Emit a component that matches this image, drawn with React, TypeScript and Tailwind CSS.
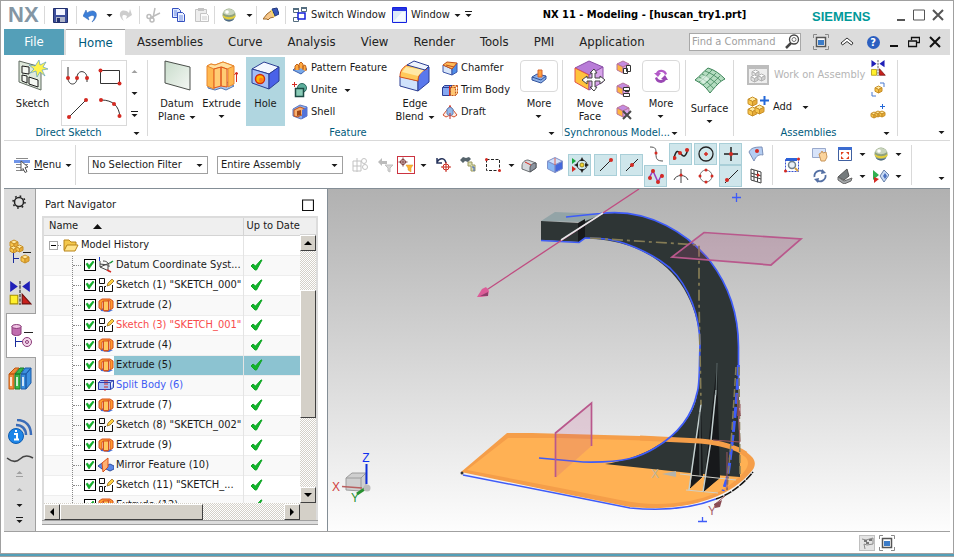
import React from "react";

type Kids = { children?: React.ReactNode };

/* ---------- drawing helpers ---------- */

function Svg({ w = 16, h = 16, className = "", children }: Kids & { w?: number; h?: number; className?: string }) {
  return (
    <svg width={w} height={h} viewBox={`0 0 ${w} ${h}`} fill="none" aria-hidden="true" className={`block shrink-0 ${className}`}>
      {children}
    </svg>
  );
}

function Caret({ color = "#1a1a1a", up = false, bar = false }: { color?: string; up?: boolean; bar?: boolean }) {
  return (
    <Svg w={7} h={8}>
      {bar && <path d="M0 .5h7" stroke={color} />}
      <path d={up ? "M.5 6h6l-3-3z" : "M.5 3h6l-3 3z"} fill={color} />
    </Svg>
  );
}

function CubeShape({ x, y, s, top, left, right, line }: { x: number; y: number; s: number; top: string; left: string; right: string; line: string }) {
  const q = s / 4;
  const h = s / 2;
  return (
    <g stroke={line} strokeLinejoin="round" transform={`translate(${x} ${y})`}>
      <path d={`M0 ${q}L${h} 0L${s} ${q}L${h} ${h}z`} fill={top} />
      <path d={`M0 ${q}L${h} ${h}V${s}L0 ${s - q}z`} fill={left} />
      <path d={`M${s} ${q}L${h} ${h}V${s}L${s} ${s - q}z`} fill={right} />
    </g>
  );
}

const Gold = ({ x, y, s }: { x: number; y: number; s: number }) => (
  <CubeShape x={x} y={y} s={s} top="#ffe9a0" left="#f8c64c" right="#e8ac38" line="#c89028" />
);
const Dot = ({ x, y, r = 2 }: { x: number; y: number; r?: number }) => <circle cx={x} cy={y} r={r} fill="#d42a22" />;

/* ---------- quick access icons ---------- */

const SaveIcon = () => (
  <Svg w={15} h={15}>
    <path d="M.5.5h14v14h-14z" fill="#3d4f9c" stroke="#22306e" />
    <path d="M3 1h9v6H3z" fill="#f4f6ff" />
    <path d="M3 9h9v5H3z" fill="#aeb4c8" />
    <path d="M4 10h3v4H4z" fill="#22306e" />
  </Svg>
);
const UndoIcon = () => (
  <Svg>
    <path d="M4 6c5-4 11-2 9 4-1 2-2 4-4 5 5-7 1-8-4-5l1 3-6-4 3-6z" fill="#3c7fd8" stroke="#2a60b0" strokeWidth=".5" />
  </Svg>
);
const RedoIcon = () => (
  <Svg>
    <path d="M11 6C7 2 1 3 2 9c1 2 2 4 4 5C2 8 6 7 9 9l-1 3 6-4-2-6z" fill="#cdcdcd" />
  </Svg>
);
const CutIcon = () => (
  <Svg>
    <path d="M9 1 7 11M14 6 4 11" stroke="#bcbcbc" strokeWidth="1.5" />
    <circle cx="6" cy="13" r="2" stroke="#bcbcbc" strokeWidth="1.5" />
    <circle cx="3" cy="9.500" r="2" stroke="#bcbcbc" strokeWidth="1.500" />
  </Svg>
);
const CopyIcon = () => (
  <Svg>
    <path d="M1.500 1.500h6l2 2v7h-8z" fill="#dfe9ff" stroke="#3450c0" />
    <path d="M6.500 5.500h5l2 2v7h-7z" fill="#eef3ff" stroke="#3450c0" />
    <path d="M8 9h4M8 11h4M8 13h4M3 4h3M3 6h3M3 8h3" stroke="#6f8ce0" />
  </Svg>
);
const PasteIcon = () => (
  <Svg>
    <path d="M1.500 2.500h11v12h-11z" fill="#ededed" stroke="#c4c4c4" />
    <path d="M4 1h6v3H4z" fill="#c4c4c4" />
    <path d="M6.500 6.500h6l2 2v6h-8z" fill="#fafafa" stroke="#c4c4c4" />
    <path d="M8 10h5M8 12h5" stroke="#ccc" />
  </Svg>
);
function SphereIcon() {
  return (
    <Svg w={14} h={14}>
      <circle cx="7" cy="7" r="6.500" fill="#8fa27c" />
      <path d="M1 5a6.500 6.500 0 0 1 12 0c-4 3-8 3-12 0z" fill="#c8d4bc" />
      <path d="M.6 7c4 3 9 3 12.800 0v2c-4 3-9 3-12.300 0z" fill="#e6cf3a" />
      <path d="M1.500 10.500c3 2 8 2 11 0a6.500 6.500 0 0 1-11 0z" fill="#4c6a8c" />
      <circle cx="5" cy="4" r="1.800" fill="#fff" />
    </Svg>
  );
}
const HandIcon = () => (
  <Svg>
    <path d="m0 12 4-5 4-3 4 3-1 3-4 1-2 2-1-1z" fill="#f7c78a" stroke="#9c6a2c" />
    <path d="m9 2 5-1 2 6-4 2z" fill="#3656b8" stroke="#22387c" />
    <path d="m8 3 3 7" stroke="#f4d860" strokeWidth="1.500" />
  </Svg>
);
const SwitchIcon = () => (
  <Svg>
    <path d="M1.500 1.500h5v4h-5zM9.500.500h5v4h-5zM1.500 10.500h5v4h-5z" fill="#fff" stroke="#556e80" />
    <path d="M1 1h6v2H1zM9 0h6v2H9z" fill="#556e80" />
    <path d="M6 6h7v6H6z" fill="#fff" stroke="#1420d8" strokeWidth="1.500" />
  </Svg>
);
const WindowIcon = () => (
  <Svg w={15}>
    <path d="M.5.500h14v15H.5z" fill="#dcebf8" stroke="#1420e0" />
    <path d="M1 1h13v3H1z" fill="#2434e0" />
    <path d="m2 14 8-9h3v9z" fill="#f4faff" />
  </Svg>
);

/* ---------- ribbon icons ---------- */

const SketchBig = () => (
  <Svg w={32} h={32}>
    <path d="M2 1 24 7v23L2 22z" fill="#dfe9dc" stroke="#5f6a60" />
    <path d="m5 6 7 1v7l-7-1zM5 15l5 1v7l-5-2zM12 17l9 3v7l-9-3z" fill="#f4f8f2" stroke="#1c1c1c" />
    <path d="m22 0 1 5 6-3-3 5 5 2-6 1 3 6-5-4-3 5-1-6-6 2 4-4-5-4 6 1z" fill="#fff34c" stroke="#5fa0c0" strokeWidth=".7" />
  </Svg>
);
const DatumBig = () => (
  <Svg w={32} h={32}>
    <defs>
      <linearGradient id="datum" x1="0" y1="0" x2="1" y2="1">
        <stop offset="0" stopColor="#c8dccb" />
        <stop offset="1" stopColor="#f4f7f3" />
      </linearGradient>
    </defs>
    <path d="m4 1 25 6v23L4 23z" fill="url(#datum)" stroke="#4a4f4a" />
  </Svg>
);
const ExtrudeBig = () => (
  <Svg w={32} h={32}>
    <path d="m2 26 6-3 6 2 7-3 7 4-8 4-5-2-6 2-7-2z" fill="#a9c8f0" stroke="#5577b0" />
    <path d="m1 6 4-2 4 1 8-3 11 4v18l-6 3V9l-6-2-8 2v20l-7-3z" fill="#ffb850" stroke="#e8862c" />
    <path d="m1 6 4-2 4 1 8-3 11 4-7 3-5-2-8 2z" fill="#ffe0a0" stroke="#e8862c" />
    <path d="M8 9l7-2v19l-7 2zM15 7l6 2v18l-6-1z" fill="#ffcc74" stroke="#e0541c" />
    <path d="M30.500 22V13M28.500 15l2-3 2 3" stroke="#d42a22" />
  </Svg>
);
const HoleBig = () => (
  <Svg w={32} h={32}>
    <path d="m2 9 12-7 15 5-10 7z" fill="#f3f7ff" stroke="#2c3f94" />
    <path d="m2 9 17 5v15L2 23z" fill="#a3bdf6" stroke="#2c3f94" />
    <path d="m19 14 10-7v14l-10 8z" fill="#4a62e8" stroke="#2c3f94" />
    <circle cx="10" cy="19" r="4.500" fill="#ffb400" stroke="#d42a10" strokeWidth="1.500" />
    <circle cx="11" cy="20" r="2.200" fill="#ff7a1c" />
  </Svg>
);
const BlendBig = () => (
  <Svg w={32} h={32}>
    <path d="m1 16 18 5v10L1 26z" fill="#cfe2fb" stroke="#2c3f94" />
    <path d="M19 20c0-6 4-9 11-13v15l-11 9z" fill="#5a78ec" stroke="#2c3f94" />
    <path d="M1 17C1 11 3 8 8 5l20 4c-6 2-9 6-9 12z" fill="#ffc95a" stroke="#d8501c" />
    <path d="m3 12 16 4 6-6L7 7z" fill="#ffe9a6" />
    <path d="m8 5 7-4 15 5-4 4z" fill="#eef4fe" stroke="#2c3f94" />
  </Svg>
);
const MoveFaceBig = () => (
  <Svg w={32} h={32}>
    <path d="m1 8 14-7 14 6-14 8z" fill="#b87cd8" stroke="#8a4fa6" />
    <path d="m1 8 14 7v15L1 22z" fill="#ffc33c" stroke="#e0504c" />
    <path d="M29 7v15l-14 8V15z" fill="#d8a5ea" stroke="#8a4fa6" />
    <path d="m20 9 3 4h-2v5h5v-2l5 4-5 4v-3h-5v6h2l-3 4-4-4h2v-6h-5v3l-5-4 5-4v2h5v-5h-2z" fill="#fff" stroke="#444" />
  </Svg>
);
const SurfaceBig = () => (
  <Svg w={32} h={28}>
    <path d="M1 13C6 9 9 5 14 1c7 2 12 6 17 11-5 2-10 8-15 14C12 20 7 16 1 13z" fill="#b4dcc0" stroke="#3c8458" />
    <path d="M5 15c5-3 9-8 13-12M9 18c5-3 9-8 13-12M12 22c5-4 10-9 14-13M5 10c6 3 11 7 15 12M8 7c6 3 12 7 16 11M11 4c6 2 12 6 16 10" stroke="#3c8458" strokeWidth=".8" />
    <path d="m5 13 6-5 5 3-6 6z" fill="#f0faf4" opacity=".6" />
  </Svg>
);
const PatternIcon = () => (
  <Svg>
    <path d="m1 10 5-4 9 3-6 5z" fill="#78a8e8" stroke="#3c62b0" />
    <path d="M3 10V6l2-2 2 2v4M7 8V4l2-2 2 2v5M11 10V6l2-1 1 2v4" fill="#ffa940" stroke="#c0641c" />
  </Svg>
);
const UniteIcon = () => (
  <Svg>
    <circle cx="10" cy="6" r="4.500" fill="#5cae9c" stroke="#2c6a60" />
    <path d="M3.500 6.500h8v8h-8z" fill="#8accb8" stroke="#1c4a44" strokeWidth="1.500" />
    <path d="M2.500 0v5M0 2.500h5" stroke="#d42a22" />
  </Svg>
);
const ShellIcon = () => (
  <Svg>
    <path d="m1 5 7-4 7 2v9l-6 3-8-3z" fill="#88aef0" stroke="#6078c0" />
    <path d="m2 6 6-3 5 2v7l-4-1-3 2-4-1z" fill="#f8b070" stroke="#c0501c" />
    <path d="m5 7 4-1v5l-4 1z" fill="#a04818" />
    <path d="m10 6 5-3v9l-5 3z" fill="#5273d8" />
  </Svg>
);
const ChamferIcon = () => (
  <Svg>
    <path d="m1 5 9 4v6l-9-3z" fill="#d8e6fa" stroke="#3c55a8" />
    <path d="m10 9 5-6v9l-5 3z" fill="#4d8ce8" stroke="#3c55a8" />
    <path d="m1 5 4-3 10 1-5 6z" fill="#ffbb58" stroke="#c0501c" />
    <path d="m4 5 8 2" stroke="#c0501c" />
  </Svg>
);
const TrimIcon = () => (
  <Svg>
    <path d="M.5 5.500h8v8h-8zM.5 5.500l2-2h8l-2 2" fill="#86a8f2" stroke="#2c3f94" />
    <path d="M8.500 5.500h5v8h-5zM8.500 5.500l2-2h5l-2 2M15.500 3.500v8l-2 2" fill="#ffc672" stroke="#c0501c" strokeDasharray="2 1" />
    <path d="M7.500 4v10" stroke="#d42a22" />
  </Svg>
);
const DraftIcon = () => (
  <Svg>
    <path d="m1 11 7-9 7 9-3 2-4-2-4 2z" fill="#fbeee8" stroke="#d4502c" />
    <path d="m5 5 3-2 3 2v5l-3 2-3-2z" fill="#94b8e8" stroke="#6484bc" />
    <path d="M8 9v6M8 1v2" stroke="#d42a22" />
  </Svg>
);
const MoreFeature = () => (
  <Svg>
    <path d="m1 9 5-3 9 2v3l-5 4-9-3z" fill="#8cb0e8" stroke="#33549c" />
    <path d="m1 9 9 3 5-4" stroke="#33549c" />
    <path d="M7 2h4v7H7z" fill="#ffa03c" stroke="#d8642c" />
  </Svg>
);
const MoreSync = () => (
  <Svg>
    <path d="M14 6a6 6 0 0 0-11-1H1l4 4 3-4H6c2-2 5-1 6 2z" fill="#b45ac8" />
    <path d="M2 10a6 6 0 0 0 11 2h2l-3-5-4 4h2c-2 2-5 1-6-2z" fill="#9a48b4" />
  </Svg>
);
function SyncSmall({ kind }: { kind: "copy" | "resize" | "delete" }) {
  return (
    <Svg>
      <CubeShape x={1} y={1} s={12} top="#c48be0" left="#ffb540" right="#d8a5ea" line="#b8749c" />
      {kind === "copy" && <path d="M7.500 8.500h4v5h-4zM10.500 5.500h4v6h-4z" fill="#fff" stroke="#333" />}
      {kind === "resize" && <path d="M7.500 5.500h6v3h-6zM7.500 11.500h6v3h-6zM9 9.500h4" fill="#fff" stroke="#333" />}
      {kind === "delete" && <path d="m7 7 8 8m0-8-8 8" stroke="#4a4a4a" strokeWidth="2" />}
    </Svg>
  );
}
const WorkAsmIcon = () => (
  <Svg w={22} h={20}>
    <path d="M1 1h20v18H1z" fill="#eee" stroke="#bdbdbd" strokeWidth="2" />
    <path d="M1 1h20v3H1z" fill="#bdbdbd" />
    <CubeShape x={5} y={5} s={7} top="#fff" left="#e2e2e2" right="#cfcfcf" line="#b4b4b4" />
    <CubeShape x={4} y={10} s={7} top="#fff" left="#e2e2e2" right="#cfcfcf" line="#b4b4b4" />
    <CubeShape x={11} y={9} s={7} top="#fff" left="#e2e2e2" right="#cfcfcf" line="#b4b4b4" />
  </Svg>
);
const AddIcon = () => (
  <Svg w={22} h={22}>
    <Gold x={1} y={1} s={9} />
    <Gold x={1} y={11} s={9} />
    <Gold x={8} y={9} s={9} />
    <path d="M17.500 0v9M13 4.500h9" stroke="#2468d8" strokeWidth="2" />
  </Svg>
);
function ConstraintIcon({ s = 16 }: { s?: number }) {
  return (
    <svg width={s} height={s} viewBox="0 0 20 22" aria-hidden="true" className="block shrink-0">
      <path d="M1 0v10l7-5zM19 0v10l-7-5z" fill="#2020b8" />
      <path d="M10 0v22" stroke="#222" strokeDasharray="3 1" />
      <path d="M1 13h7v8H1z" fill="#fff02c" stroke="#a89000" />
      <path d="M12 12v9h8z" fill="#c8201c" stroke="#701010" />
    </svg>
  );
}
const MoveComp = () => (
  <Svg>
    <Gold x={5} y={4} s={7} />
    <path d="M10 1h4v4M6 14H2v-4" stroke="#4a7ad0" />
  </Svg>
);
const PatternComp = () => (
  <Svg>
    <Gold x={1} y={8} s={6} />
    <Gold x={5} y={7} s={6} />
    <Gold x={9} y={7} s={6} />
    <path d="M12.500 0v5M10 2.500h5" stroke="#2468d8" />
  </Svg>
);

const CurveProfile = () => (
  <Svg w={26} h={24}>
    <path d="M3 2v11c0 8 9 8 9 0 0-9 10-8 10 0v4" stroke="#333" />
    <Dot x={3} y={13} /><Dot x={12} y={13} /><Dot x={22} y={13} />
  </Svg>
);
const RectCurve = () => (
  <Svg w={26} h={24}>
    <path d="M3.500 5.500h19v13h-19z" stroke="#333" />
    <Dot x={3.500} y={5.500} /><Dot x={22.500} y={18.500} />
  </Svg>
);
const LineCurve = () => (
  <Svg w={26} h={24}>
    <path d="M4 20 21 3" stroke="#333" />
    <Dot x={4} y={20} /><Dot x={21} y={3} />
  </Svg>
);
const ArcCurve = () => (
  <Svg w={26} h={24}>
    <path d="M4 3c12 0 18 6 19 17" stroke="#333" />
    <Dot x={4} y={3} /><Dot x={17} y={7} /><Dot x={22.500} y={19} />
  </Svg>
);

/* ---------- selection bar icons ---------- */

const MenuIcon = () => (
  <Svg>
    <path d="M2 1.500h12M2 7.500h12M2 10.500h8M2 13.500h8" stroke="#8a8a8a" />
    <path d="M0 3h16v3H0z" fill="#6f94e8" />
    <path d="m7 4 7 6-3 .500 2 4-2 1-2-4-2 2z" fill="#fff" stroke="#555" />
  </Svg>
);
const Target = ({ x, y, r, c }: { x: number; y: number; r: number; c: string }) => (
  <g stroke={c}>
    <circle cx={x} cy={y} r={r} />
    <path d={`M${x - r - 2} ${y}h${2 * r + 4}M${x} ${y - r - 2}v${2 * r + 4}`} />
  </g>
);
const AllowIcon = () => (
  <Svg>
    <path d="M1 4h8v10H1zM5 1v14M1 9h8" stroke="#c2c2c2" />
    <circle cx="12" cy="4" r="2.500" stroke="#c2c2c2" /><circle cx="13" cy="10" r="2.500" stroke="#c2c2c2" />
  </Svg>
);
const ResetFilter = () => (
  <Svg>
    <path d="m1 5 4-4v3h5v3H5v2z" fill="#bbb" />
    <path d="M8 8h8l-3 3v4l-2-1v-3z" fill="#d8d8d8" stroke="#c0c0c0" />
  </Svg>
);
const FilterRed = () => (
  <Svg>
    <Target x={5} y={5} r={2.500} c="#7c3a3a" />
    <path d="M8 8h7l-2 3v4l-3-2v-2z" fill="#ffb430" stroke="#d89020" strokeWidth=".5" />
  </Svg>
);
const SnapUndo = () => (
  <Svg>
    <path d="M1 1v5h5M1 5c3-5 8-4 9 1" stroke="#27345c" strokeWidth="1.500" />
    <Target x={10} y={10} r={3} c="#c8281c" />
  </Svg>
);
const ToolsFind = () => (
  <Svg>
    <path d="m0 3 3-3 3 1 3-1 2 2-3 3-3-1-2 2z" fill="#56646c" />
    <path d="M8 5h4v3h3v6h-4V9H8z" fill="#d8dcae" stroke="#9c9a60" />
    <path d="M12 10h2v4" stroke="#3a60c0" />
  </Svg>
);
const DashRect = () => (
  <Svg>
    <path d="M1.500 2.500h13v11h-13z" stroke="#222" strokeDasharray="3 1.500" />
    <Dot x={1.500} y={2.500} r={1.500} /><Dot x={14.500} y={13.500} r={1.500} />
  </Svg>
);
const GrayBlend = () => (
  <Svg>
    <path d="M1 9c0-4 3-6 6-6l8 3v5l-6 4-8-3z" fill="#d4d8dc" stroke="#6c7074" />
    <path d="M9 15V11c0-3 3-5 6-5v5z" fill="#8c94a0" stroke="#54585c" />
    <path d="m4 5 6 3" stroke="#d42a22" />
  </Svg>
);
const BlueCube = () => (
  <Svg>
    <CubeShape x={0.5} y={0.5} s={15} top="#cfe0fa" left="#88b8f4" right="#4468dc" line="#8090c8" />
    <path d="M8 1v7" stroke="#e06050" />
  </Svg>
);
const SnapPoint = () => (
  <Svg w={18} h={18}>
    <path d="m1 2 4 3-4 3z" fill="#18a83c" /><path d="m1 10 4 3-4 3z" fill="#d42a22" />
    <circle cx="11" cy="9" r="5" stroke="#444" />
    <path d="M11 1 9 5h4zM11 17l-2-4h4zM3 9l4-2v4zM18 9l-4-2v4z" fill="#222" />
    <circle cx="11" cy="9" r="2" fill="#f2d830" stroke="#a08820" />
  </Svg>
);
const EndPoint = () => <Svg><path d="m2 14 12-12" stroke="#222" /><Dot x={13} y={3} /></Svg>;
const MidPoint = () => <Svg><path d="m2 14 12-12" stroke="#222" /><Dot x={8} y={8} /></Svg>;
const ControlPt = () => <Svg><path d="M2 1c6 0 6 2 6 7s1 7 7 7" stroke="#555" /><Dot x={8} y={7} r={1.500} /></Svg>;
const SplinePt = () => (
  <Svg><path d="M1 12c2-8 4-8 7-4s5 2 7-5" stroke="#222" strokeWidth="1.500" /><Dot x={1.500} y={12} /><Dot x={7} y={7} /><Dot x={14} y={4} /></Svg>
);
const CenterPt = () => <Svg><circle cx="8" cy="8" r="7" stroke="#222" strokeWidth="1.300" /><path d="M6 8h4M8 6v4" stroke="#d42a22" strokeWidth="1.500" /></Svg>;
const CrossPt = () => <Svg><path d="M8 1v14M1 8h14" stroke="#222" strokeWidth="1.500" /><Dot x={8} y={8} /></Svg>;
const SheetPt = () => <Svg><path d="M1 6c2-4 5-5 13-5l1 8c-4-1-7 1-9 6z" fill="#b4cdf2" stroke="#7c90b8" /><Dot x={9} y={5} /></Svg>;
const PolePt = () => (
  <Svg><path d="m1 10 4-7 5 11 4-8" stroke="#9a3cc0" strokeWidth="1.500" /><Dot x={2} y={10} /><Dot x={5} y={3} /><Dot x={10} y={14} /><Dot x={14} y={8} /></Svg>
);
const TangentPt = () => <Svg><path d="M8 1v14M1 12c2-6 12-6 14 0" stroke="#444" /><Dot x={8} y={7} r={1.500} /></Svg>;
const QuadPt = () => (
  <Svg><circle cx="8" cy="8" r="6" stroke="#777" /><Dot x={8} y={2} r={1.500} /><Dot x={8} y={14} r={1.500} /><Dot x={2} y={8} r={1.500} /><Dot x={14} y={8} r={1.500} /></Svg>
);
const OnCurve = () => <Svg><path d="m2 15 13-13" stroke="#222" /><Dot x={4} y={12} /></Svg>;
const GridPt = () => <Svg><path d="m3 1 10 3v11L3 12zM6 2v11M9.500 3v11M3 5l10 3M3 8l10 3" stroke="#444" /><Dot x={10} y={7} r={1.500} /></Svg>;
const FitIcon = () => (
  <Svg>
    <path d="M1.500 2.500h13v12h-13z" stroke="#3450d0" strokeDasharray="2 1" /><path d="M2 1h11v3H2z" fill="#2c62d8" />
    <circle cx="8" cy="8" r="3.500" fill="#eaf0f6" stroke="#70808c" strokeWidth="1.500" /><path d="m11 11 3 3" stroke="#d8a040" strokeWidth="2" />
    <Dot x={1.500} y={14} r={1.500} /><Dot x={14.500} y={2} r={1.500} />
  </Svg>
);
const PanIcon = () => (
  <Svg><path d="M.5 2.500h13v9H.5z" fill="#d8e4fa" stroke="#99a9cc" /><path d="m7 8 2-1 1-2 1 2 3-1 1 5-2 4h-4z" fill="#fbd49c" stroke="#c8965c" /></Svg>
);
const FullView = () => (
  <Svg><path d="M1.500 2.500h13v12h-13z" fill="#fff" stroke="#4060a0" /><path d="M1 1h14v3H1z" fill="#3c6cd0" /><path d="M4 6h3L4 9zM12 6H9l3 3zM4 13v-3l3 3zM12 13v-3l-3 3z" fill="#e0401c" /></Svg>
);
const RotateIcon = () => (
  <Svg><path d="M2.500 9a5.500 5.500 0 0 1 9-5M13.500 7a5.500 5.500 0 0 1-9 5" stroke="#5470a4" strokeWidth="1.800" /><path d="m10 1 4 4-5 1zM6 15l-4-4 5-1z" fill="#5470a4" /></Svg>
);
const ShadeIcon = () => (
  <Svg><path d="m1 9 9-8 2 7-5 4z" fill="#747a7c" stroke="#555" /><path d="m1 9 6 4 8-3-1 3-7 3-6-4z" fill="#a4a8aa" stroke="#666" /></Svg>
);
const ClipIcon = () => (
  <Svg><path d="m0 2 6 5-6 5z" fill="#30b050" /><path d="m1 9 5 2-5 4z" fill="#d42a22" /><path d="m7 8 4-6 5 5-5 7z" fill="#c8daf4" stroke="#6680a8" /><path d="m10 8 2-3 2 3-2 3z" fill="#4a70c0" /></Svg>
);

/* ---------- resource bar icons ---------- */

const GearIcon = () => (
  <Svg w={14} h={14}>
    <circle cx="7" cy="7" r="4.500" stroke="#222" strokeWidth="1.500" />
    <circle cx="7" cy="7" r="6" stroke="#222" strokeWidth="1.500" strokeDasharray="1.700 3" />
  </Svg>
);
const AsmNavIcon = () => (
  <Svg w={24} h={26}>
    <Gold x={2} y={1} s={8} /><Gold x={2} y={7} s={7} /><Gold x={8} y={6} s={7} /><Gold x={13} y={16} s={8} />
    <path d="M15 13.500h8" stroke="#222" /><path d="M5.500 14v10M6 19.500h5" stroke="#1a2c9c" />
  </Svg>
);
const PartNavIcon = () => (
  <Svg w={24} h={26}>
    <path d="M2 3v8c2 2 7 2 9 0V3z" fill="#c06cae" stroke="#8a3a78" /><ellipse cx="6.500" cy="3.500" rx="4.500" ry="2" fill="#f0c4e4" stroke="#8a3a78" />
    <path d="M14 9.500h9" stroke="#222" /><path d="M5.500 14v10M6 18.500h6" stroke="#1a2c9c" />
    <circle cx="17" cy="19" r="4.500" fill="#f4d8ec" stroke="#8a3a78" /><circle cx="17" cy="19" r="1.500" stroke="#8a3a78" />
  </Svg>
);
const BooksIcon = () => (
  <Svg w={24} h={24}>
    <path d="M1 8h5v15H1zM1 8l6-6h4L6 8z" fill="#f08a3c" stroke="#c05810" />
    <path d="M7 8h5v15H7zM7 8l5-6h4l-4 6z" fill="#38b848" stroke="#187a28" />
    <path d="M13 8h5v15h-5zM13 8l4-6h6l-5 6zM18 8l5-6v15l-5 6z" fill="#3c90e0" stroke="#1c5ca8" />
    <path d="M3 11v9M9 11v9M15 11v9" stroke="#fff" strokeWidth="1.500" />
  </Svg>
);
const InfoIcon = () => (
  <Svg w={26} h={26}>
    <path d="M9 6c6 0 10 4 10 10M10 1c9 0 14 6 14 15" stroke="#3a6cb8" strokeWidth="2.500" />
    <circle cx="9" cy="17" r="7.500" fill="#1e86e8" stroke="#0e5cb0" />
    <path d="M7 15h3v5M7 20.500h5" stroke="#fff" strokeWidth="2" /><path d="M8 11h2v2H8z" fill="#fff" />
  </Svg>
);

/* ---------- tree icons ---------- */

const FolderIcon = () => (
  <Svg>
    <path d="M1 13V3h5l2 2h5v3" fill="#f4c84c" stroke="#b88418" /><path d="m1 14 3-6h11l-3 6z" fill="#ffe48c" stroke="#b88418" />
  </Svg>
);
const CsysIcon = () => (
  <Svg><path d="M2 4v6l9 4M2 10l12-5M5 4c4 0 6 2 6 6M2 7l8 1v5" stroke="#444" /><path d="M1.500 0v4" stroke="#2040d0" /><path d="m12 6 3-2" stroke="#20a040" strokeWidth="1.500" /><path d="m9 13 4 2" stroke="#d42a22" strokeWidth="1.500" /></Svg>
);
const SketchIcon = () => (
  <Svg><path d="M1.500 1.500h5v5h-5zM1.500 9.500h3v5h-3zM8 9.500H6.500v5h8V8" stroke="#111" /><path d="m9 9 1-3 4-4 2 2-4 4z" fill="#ffd040" stroke="#8a5a10" strokeWidth=".7" /></Svg>
);
const ExtrudeIcon = () => (
  <Svg><path d="m2 11 13 2-4 2-8-1z" fill="#3c70e0" /><path d="m1 4 3-2h8l3 2v7l-3 2V4l-2-1v11H6V4L4 5v8l-3-2z" fill="#ff9c30" stroke="#d4501c" /><path d="M5.500 4h5v9.500h-5z" fill="#ffc860" stroke="#d4501c" /></Svg>
);
const SplitIcon = () => (
  <Svg><path d="M.5 5.500h12v7H.5zM.5 5.500l2-2h13l-3 2M15.500 3.500v7l-3 2" fill="#a8c0f8" stroke="#3040b0" /><path d="M7 3v11M9 3v9" stroke="#d42a22" strokeDasharray="2 1" /></Svg>
);
const MirrorIcon = () => (
  <Svg><path d="m0 9 4-3 4 1v4l-4 1zM8 9l4-2 4 2v3l-4 2-4-2z" fill="#5c88e8" stroke="#3050a0" /><path d="m4 6 6-5v9l-5 5z" fill="#ffb070" stroke="#d8501c" /></Svg>
);
const GreenCheck = () => (
  <Svg w={13} h={12}><path d="m1 7 2-2 2.500 2L11 1h1L6.500 11H5z" fill="#12b52c" stroke="#12a528" /></Svg>
);

/* ---------- layout parts ---------- */

function Slot({ className, label, children }: Kids & { className: string; label: string }) {
  return (
    <button type="button" aria-label={label} className={`flex shrink-0 items-center justify-center ${className}`}>
      {children}
    </button>
  );
}

const Sep = ({ className = "h-[18px]" }: { className?: string }) => <div className={`w-px shrink-0 bg-[#d9d9d9] ${className}`} />;

function TitleBar() {
  return (
    <header className="flex h-7 shrink-0 items-center">
      <div className="w-10 pl-1 font-['Liberation_Sans',sans-serif] text-[22px] leading-[26px] font-bold text-[#8496a4]">NX</div>
      <Sep />
      <Slot className="w-[31px]" label="Save"><SaveIcon /></Slot>
      <Sep />
      <Slot className="w-7" label="Undo"><UndoIcon /></Slot>
      <Slot className="w-2" label="Undo list"><Caret /></Slot>
      <Slot className="w-[26px]" label="Redo"><RedoIcon /></Slot>
      <Sep />
      <Slot className="w-7" label="Cut"><CutIcon /></Slot>
      <Slot className="w-[22px]" label="Copy"><CopyIcon /></Slot>
      <Slot className="w-6" label="Paste"><PasteIcon /></Slot>
      <Sep />
      <Slot className="w-7" label="Repeat command"><SphereIcon /></Slot>
      <Slot className="w-[13px]" label="Repeat list"><Caret /></Slot>
      <Sep />
      <Slot className="w-7" label="Touch mode"><HandIcon /></Slot>
      <Sep />
      <button type="button" className="ml-1.5 flex items-center gap-[3px] whitespace-nowrap"><SwitchIcon />Switch Window</button>
      <button type="button" className="ml-1.5 flex items-center gap-1 whitespace-nowrap"><WindowIcon />Window<Caret /></button>
      <Slot className="w-4" label="Toolbar options"><Caret bar /></Slot>
      <h1 className="min-w-0 flex-1 text-center font-bold whitespace-nowrap text-black">NX 11 - Modeling - [huscan_try1.prt]</h1>
      <div className="w-20 pt-1 font-['Liberation_Sans',sans-serif] text-[13px] font-bold text-[#009999]">SIEMENS</div>
      <Slot className="w-[18px]" label="Minimize"><Svg w={12} h={14}><path d="M2 12h8" stroke="#555" strokeWidth="2" /></Svg></Slot>
      <Slot className="w-[18px]" label="Maximize"><Svg w={12} h={12}><path d="M.5 1h11v10H.5z" stroke="#555" /></Svg></Slot>
      <Slot className="w-5" label="Close"><Svg w={12} h={12}><path d="m1 1 10 10m0-10L1 11" stroke="#555" strokeWidth="2" /></Svg></Slot>
      <div className="w-0.5" />
    </header>
  );
}

const WindowFit = () => (
  <Svg>
    <path d="M.5 4V.5H4M12 .5h3.500V4M15.500 12v3.500H12M4 15.500H.5V12" stroke="#8a8a8a" />
    <path d="M3.500 3.500h9v9h-9z" fill="#fff" stroke="#555" strokeWidth="1.500" /><path d="M5 6h6v5H5z" fill="#3c7cc8" />
  </Svg>
);

function TabRow() {
  const tabs = ["Assemblies", "Curve", "Analysis", "View", "Render", "Tools", "PMI", "Application"];
  return (
    <nav className="flex h-[26px] shrink-0 items-center bg-[#dcdcdc] text-[13px] text-[#222]">
      <button type="button" className="h-full w-[60px] bg-[#549fb8] text-white">File</button>
      <button type="button" className="ml-0.5 h-full w-[59px] border-t border-[#9a9a9a] bg-white text-[#005a7c]">Home</button>
      <div className="flex h-full gap-px">
        {tabs.map((t) => (
          <button key={t} type="button" className="h-full px-3 whitespace-nowrap">{t}</button>
        ))}
      </div>
      <div className="flex-1" />
      <label className="flex h-[18px] w-[112px] shrink-0 items-center border border-[#a8a8a8] bg-white">
        <input type="text" aria-label="Find a Command" placeholder="Find a Command" className="w-0 min-w-0 flex-1 bg-transparent pl-0.5 text-[11px] outline-none placeholder:text-[#a0a0a0]" />
        <Svg>
          <circle cx="10" cy="5.500" r="4.500" fill="#fff" stroke="#444" strokeWidth="1.300" /><circle cx="10" cy="5.500" r="2" stroke="#777" />
          <path d="m7 9-5 5" stroke="#444" strokeWidth="2.500" />
        </Svg>
      </label>
      <Slot className="ml-[7px] w-[26px]" label="Full screen"><WindowFit /></Slot>
      <Slot className="w-[26px]" label="Minimize ribbon"><Svg w={14} h={10}><path d="m1 6 6-5 6 5-1.500 2L7 4.500 2.500 8z" fill="#fff" stroke="#333" /></Svg></Slot>
      <Slot className="w-[26px]" label="Help">
        <span className="flex size-[13px] items-center justify-center rounded-full bg-[#2c5fc0] text-[11px] leading-none font-bold text-white">?</span>
      </Slot>
      <Slot className="w-4" label="Minimize part"><Svg w={10} h={12}><path d="M1 10h8" stroke="#111" strokeWidth="2" /></Svg></Slot>
      <Slot className="w-6" label="Restore part"><Svg w={12} h={12}><path d="M3.500 4V1.500h8v5H9M.5 5h8v5.500h-8z" stroke="#111" strokeWidth="1.300" /></Svg></Slot>
      <Slot className="w-[18px]" label="Close part"><Svg w={12} h={12}><path d="m1 1 10 10m0-10L1 11" stroke="#111" strokeWidth="2" /></Svg></Slot>
      <div className="w-1.5" />
    </nav>
  );
}

function Group({ className, label, children, menu = true }: Kids & { className: string; label: string; menu?: boolean }) {
  return (
    <>
      <section className={`flex shrink-0 flex-col ${className}`} aria-label={label}>
        <div className="flex h-[70px]">{children}</div>
        <div className="flex h-[13px] items-center pr-[7px] leading-[13px] text-[#005a7c]">
          <span className="min-w-0 flex-1 text-center whitespace-nowrap">{label}</span>
          {menu && <Caret />}
        </div>
      </section>
      <Sep className="my-1" />
    </>
  );
}

function Big({ className = "", pad = "pt-1", icon, children }: Kids & { className?: string; pad?: string; icon: React.ReactNode }) {
  return (
    <button type="button" className={`flex shrink-0 flex-col items-center leading-[13px] ${pad} ${className}`}>
      {icon}
      <span className="mt-[5px] flex flex-col items-center">{children}</span>
    </button>
  );
}

function Row({ icon, children }: Kids & { icon: React.ReactNode }) {
  return (
    <button type="button" className="flex h-[22px] items-center gap-[3px] whitespace-nowrap">{icon}{children}</button>
  );
}

const Framed = ({ children }: Kids) => (
  <span className="flex h-8 w-[38px] items-center justify-center rounded-sm border border-[#dadada]">{children}</span>
);

const CaretLine = () => <span className="flex h-3 items-center"><Caret /></span>;

function Ribbon() {
  return (
    <div className="flex h-[86px] shrink-0 border-b border-[#d9d9d9] pt-px">
      <Group className="w-[143px]" label="Direct Sketch">
        <Big className="w-[57px]" icon={<SketchBig />}>Sketch</Big>
        <div className="mt-1 grid h-[66px] w-[66px] grid-cols-2 place-items-center border border-[#d9d9d9]">
          <button type="button" aria-label="Profile"><CurveProfile /></button>
          <button type="button" aria-label="Rectangle"><RectCurve /></button>
          <button type="button" aria-label="Line"><LineCurve /></button>
          <button type="button" aria-label="Arc"><ArcCurve /></button>
        </div>
        <div className="mt-1 flex w-[14px] flex-col">
          <Slot className="h-[22px]" label="Scroll up"><Caret up color="#a0a0a0" /></Slot>
          <Slot className="h-[22px]" label="Scroll down"><Caret /></Slot>
          <Slot className="h-[22px]" label="Expand gallery"><Caret bar /></Slot>
        </div>
      </Group>

      <Group className="w-[414px]" label="Feature">
        <Big className="ml-1.5 w-[46px]" icon={<DatumBig />}>
          <span>Datum</span>
          <span className="flex items-center gap-1">Plane <Caret /></span>
        </Big>
        <Big className="w-[43px]" icon={<ExtrudeBig />}>Extrude<CaretLine /></Big>
        <Big className="mt-px ml-[3px] w-[39px] bg-[#b0d6e0]" pad="pt-[3px]" icon={<HoleBig />}>Hole</Big>
        <div className="ml-[7px] w-[100px] pt-px">
          <Row icon={<PatternIcon />}>Pattern Feature</Row>
          <Row icon={<UniteIcon />}>Unite<span className="ml-1"><Caret /></span></Row>
          <Row icon={<ShellIcon />}>Shell</Row>
        </div>
        <Big className="w-[46px]" icon={<BlendBig />}>
          <span>Edge</span>
          <span className="flex items-center gap-1">Blend <Caret /></span>
        </Big>
        <div className="ml-1 w-[78px] pt-px">
          <Row icon={<ChamferIcon />}>Chamfer</Row>
          <Row icon={<TrimIcon />}>Trim Body</Row>
          <Row icon={<DraftIcon />}>Draft</Row>
        </div>
        <Big icon={<Framed><MoreFeature /></Framed>}>More<CaretLine /></Big>
      </Group>

      <Group className="w-[122px]" label="Synchronous Model...">
        <Big className="ml-2 w-[38px]" icon={<MoveFaceBig />}><span>Move</span><span>Face</span></Big>
        <div className="ml-[7px] w-[26px] pt-px">
          <Slot className="h-[22px]" label="Copy face"><SyncSmall kind="copy" /></Slot>
          <Slot className="h-[22px]" label="Resize face"><SyncSmall kind="resize" /></Slot>
          <Slot className="h-[22px]" label="Delete face"><SyncSmall kind="delete" /></Slot>
        </div>
        <Big icon={<Framed><MoreSync /></Framed>}>More<CaretLine /></Big>
      </Group>

      <Group className="w-[47px]" label="" menu={false}>
        <Big className="w-full" pad="pt-[11px]" icon={<SurfaceBig />}><span className="pt-0.5">Surface</span><CaretLine /></Big>
      </Group>

      <Group className="w-[163px]" label="Assemblies">
        <div className="flex w-[131px] flex-col pl-[13px]">
          <button type="button" className="flex h-[35px] items-center gap-[5px] pt-0.5 whitespace-nowrap text-[#b4b4b4]"><WorkAsmIcon />Work on Assembly</button>
          <button type="button" className="flex h-[31px] items-center gap-1"><AddIcon />Add<span className="ml-1.5"><Caret /></span></button>
        </div>
        <div className="ml-[5px] flex flex-col pt-px">
          <Slot className="h-[22px]" label="Assembly constraints"><ConstraintIcon /></Slot>
          <Slot className="h-[22px]" label="Move component"><MoveComp /></Slot>
          <Slot className="h-[22px]" label="Pattern component"><PatternComp /></Slot>
        </div>
      </Group>
      <div className="flex flex-1 items-end justify-end pr-[5px] pb-1"><Caret /></div>
    </div>
  );
}

function Picker({ label, value, className }: { label: string; value: string; className: string }) {
  return (
    <label className={`grid h-[18px] shrink-0 border border-[#a0a0a0] bg-white ${className}`}>
      <select aria-label={label} defaultValue={value} className="w-full appearance-none pl-[3px] outline-none [grid-area:1/1]">
        <option>{value}</option>
      </select>
      <span className="pointer-events-none self-center justify-self-end pr-1 [grid-area:1/1]"><Caret /></span>
    </label>
  );
}

function Toggle({ on = false, label, children }: Kids & { on?: boolean; label: string }) {
  return (
    <button type="button" aria-label={label} aria-pressed={on} className={`flex h-[22px] w-[23px] items-center justify-center ${on ? "border border-[#a9cfd8] bg-[#cfe6eb]" : ""}`}>
      {children}
    </button>
  );
}

function SelectionBar() {
  return (
    <div className="flex h-12 shrink-0 items-center border-b border-[#848e96]">
      <button type="button" className="flex w-[71px] items-center gap-1 pl-2.5"><MenuIcon /><span><u>M</u>enu</span><Caret /></button>
      <Sep className="h-10" />
      <Picker label="Selection filter" value="No Selection Filter" className="ml-3 w-[120px]" />
      <Picker label="Selection scope" value="Entire Assembly" className="ml-[9px] w-[126px]" />
      <Slot className="ml-1 w-[25px]" label="Allow selection"><AllowIcon /></Slot>
      <Slot className="w-[25px]" label="Reset filters"><ResetFilter /></Slot>
      <button type="button" aria-label="General filters" className="border border-[#cc3340]"><FilterRed /></button>
      <Slot className="w-[17px]" label="Filter list"><Caret /></Slot>
      <Slot className="w-[23px]" label="Restore filters"><SnapUndo /></Slot>
      <Slot className="w-[25px]" label="Find"><ToolsFind /></Slot>
      <Slot className="w-[26px]" label="Rectangle select"><DashRect /></Slot>
      <Slot className="w-[10px]" label="Select list"><Caret /></Slot>
      <Slot className="w-[26px]" label="Face rule"><GrayBlend /></Slot>
      <Slot className="w-[26px]" label="Highlight"><BlueCube /></Slot>
      <div className="flex gap-[3px]">
        <Toggle on label="Snap point"><SnapPoint /></Toggle>
        <Toggle on label="End point"><EndPoint /></Toggle>
        <Toggle on label="Mid point"><MidPoint /></Toggle>
      </div>
      <div className="grid grid-cols-[repeat(5,25px)] justify-items-center">
        <Toggle label="Control point"><ControlPt /></Toggle>
        <Toggle on label="Spline point"><SplinePt /></Toggle>
        <Toggle on label="Arc center"><CenterPt /></Toggle>
        <Toggle on label="Intersection"><CrossPt /></Toggle>
        <Toggle label="Point on face"><SheetPt /></Toggle>
        <Toggle on label="Pole"><PolePt /></Toggle>
        <Toggle label="Tangent point"><TangentPt /></Toggle>
        <Toggle label="Quadrant point"><QuadPt /></Toggle>
        <Toggle on label="Point on curve"><OnCurve /></Toggle>
        <Toggle label="Grid point"><GridPt /></Toggle>
      </div>
      <Sep className="ml-1 h-10" />
      <Slot className="w-[34px] pl-1" label="Fit"><FitIcon /></Slot>
      <div className="grid h-11 grid-cols-[25px_25px_11px_25px_11px] place-items-center">
        <Slot className="" label="Pan"><PanIcon /></Slot>
        <Slot className="" label="Orient view"><FullView /></Slot>
        <Slot className="" label="Orient list"><Caret /></Slot>
        <Slot className="" label="Render style"><SphereIcon /></Slot>
        <Slot className="" label="Style list"><Caret /></Slot>
        <Slot className="" label="Rotate"><RotateIcon /></Slot>
        <Slot className="" label="Shading"><ShadeIcon /></Slot>
        <Slot className="" label="Shading list"><Caret /></Slot>
        <Slot className="" label="Clip section"><ClipIcon /></Slot>
        <Slot className="" label="Clip list"><Caret /></Slot>
      </div>
      <Sep className="ml-[7px] h-10" />
      <div className="flex h-full flex-1 items-end justify-end pr-[5px] pb-1.5"><Caret /></div>
    </div>
  );
}

function ResourceBar() {
  return (
    <aside className="flex w-8 shrink-0 flex-col items-center border-r border-[#a0a0a0] bg-[#dcdcdc]">
      <Slot className="h-[26px] pr-px" label="Settings"><GearIcon /></Slot>
      <Slot className="mt-4 h-[42px]" label="Assembly Navigator"><AsmNavIcon /></Slot>
      <Slot className="h-10" label="Constraint Navigator"><ConstraintIcon s={24} /></Slot>
      <Slot className="-mr-px ml-0.5 h-[45px] self-stretch border border-r-0 border-[#a0a0a0] bg-white" label="Part Navigator"><PartNavIcon /></Slot>
      <Slot className="h-10" label="Reuse Library"><BooksIcon /></Slot>
      <Slot className="mt-[13px] h-[42px]" label="Web Browser"><InfoIcon /></Slot>
      <Svg w={28} h={12}><path d="M1 5c5 4 9 5 13 1s8-4 13-1" stroke="#444" strokeWidth="1.500" /></Svg>
      <Slot className="h-4 rotate-180" label="First"><Caret bar color="#a0a0a0" /></Slot>
      <Slot className="h-4" label="Previous"><Caret up color="#a0a0a0" /></Slot>
      <Slot className="h-4" label="Next"><Caret /></Slot>
      <Slot className="h-4" label="Last"><Caret bar /></Slot>
    </aside>
  );
}

type Item = { name: string; icon: React.ReactNode; tone?: string; selected?: boolean };
const items: Item[] = [
  { name: "Datum Coordinate Syst...", icon: <CsysIcon /> },
  { name: 'Sketch (1) "SKETCH_000"', icon: <SketchIcon /> },
  { name: "Extrude (2)", icon: <ExtrudeIcon /> },
  { name: 'Sketch (3) "SKETCH_001"', icon: <SketchIcon />, tone: "text-[#f84c4c]" },
  { name: "Extrude (4)", icon: <ExtrudeIcon /> },
  { name: "Extrude (5)", icon: <ExtrudeIcon />, selected: true },
  { name: "Split Body (6)", icon: <SplitIcon />, tone: "text-[#3f5cf4]" },
  { name: "Extrude (7)", icon: <ExtrudeIcon /> },
  { name: 'Sketch (8) "SKETCH_002"', icon: <SketchIcon /> },
  { name: "Extrude (9)", icon: <ExtrudeIcon /> },
  { name: "Mirror Feature (10)", icon: <MirrorIcon /> },
  { name: 'Sketch (11) "SKETCH_...', icon: <SketchIcon /> },
  { name: "Extrude (12)", icon: <ExtrudeIcon /> },
];

function ScrollArrow({ d, label }: { d: string; label: string }) {
  return (
    <button type="button" aria-label={label} className="flex size-4 shrink-0 items-center justify-center border border-t-white border-r-[#404040] border-b-[#404040] border-l-white bg-[#d4d0c8]">
      <Svg w={8} h={8}><path d={d} fill="#000" /></Svg>
    </button>
  );
}

function PartNavigator() {
  return (
    <section className="flex w-[292px] shrink-0 flex-col border-r border-[#848e96] px-1.5 pr-[9px] pb-1.5">
      <div className="flex h-[27px] items-center justify-between pt-1 pr-1 pl-[3px]">
        <h2>Part Navigator</h2>
        <Slot className="size-3" label="Maximize panel"><Svg w={12} h={12}><path d="M.5 1h11v10.500H.5zM0 1h12" stroke="#111" strokeWidth="1.200" /></Svg></Slot>
      </div>
      <div className="flex min-h-0 flex-1 flex-col border-2 border-b-0 border-[#dcdcdc]">
        <div className="grid min-h-0 flex-1 grid-cols-[minmax(0,1fr)_16px] grid-rows-[17px_minmax(0,1fr)_17px]">
          <div className="col-start-1 row-span-2 row-start-1 overflow-hidden">
            <table className="w-full table-fixed border-collapse text-left">
              <thead>
                <tr className="h-[17px] bg-[#efefef] leading-4">
                  <th className="w-[199px] border-r border-b border-[#d4d4d4] p-0 font-normal">
                    <span className="flex items-center gap-[15px] pl-[5px]">Name<Svg w={9} h={5}><path d="M0 5h9L4.500 0z" fill="#111" /></Svg></span>
                  </th>
                  <th className="border-b border-[#d4d4d4] p-0 pl-[3px] font-normal whitespace-nowrap">Up to Date</th>
                </tr>
              </thead>
              <tbody>
                <tr className="h-5 border-b border-[#eeeeee]">
                  <td className="border-r border-[#e4e4e4] p-0">
                    <div className="flex h-[19px] items-center pl-[5px]">
                      <button type="button" aria-label="Collapse" className="flex size-[9px] items-center justify-center border border-[#a8a8a8]"><span className="h-px w-[5px] bg-black" /></button>
                      <span className="mr-0.5 w-[3px] border-t border-dotted border-[#888]" />
                      <FolderIcon />
                      <span className="ml-0.5">Model History</span>
                    </div>
                  </td>
                  <td className="p-0" />
                </tr>
                {items.map((it, i) => (
                  <tr key={it.name} className={`h-5 border-b border-[#eeeeee] ${i % 2 ? "bg-white" : "bg-[#f9f9f9]"}`}>
                    <td className="border-r border-[#e4e4e4] p-0">
                      <label className="flex h-[19px] items-center">
                        <span className="ml-7 flex h-[19px] w-3 items-center border-l border-dotted border-[#888]">
                          <span className="w-2 border-t border-dotted border-[#888]" />
                        </span>
                        <span className="grid size-3 place-items-center">
                          <input type="checkbox" defaultChecked className="size-3 appearance-none border border-black bg-white [grid-area:1/1]" />
                          <Svg w={10} h={10} className="pointer-events-none [grid-area:1/1]"><path d="m1 4 1.500-1L4 5.500 8 1l1 1-5 7z" fill="#12b52c" stroke="#0a9a20" strokeWidth=".6" /></Svg>
                        </span>
                        <span className="ml-0.5">{it.icon}</span>
                        <span className={`flex h-[19px] min-w-0 flex-1 items-center pl-0.5 whitespace-nowrap ${it.tone ?? ""} ${it.selected ? "bg-[#8cc3d1]" : ""}`}>{it.name}</span>
                      </label>
                    </td>
                    <td className={`p-0 pl-1.5 ${it.selected ? "bg-[#8cc3d1]" : ""}`}><GreenCheck /></td>
                  </tr>
                ))}
              </tbody>
            </table>
          </div>
          <div className="col-start-2 row-start-1 border-b border-[#d4d4d4] bg-[#efefef]" />
          <div className="col-start-2 row-start-2 flex flex-col bg-[repeating-conic-gradient(#ffffff_0_25%,#d4d0c8_0_50%)] bg-[length:2px_2px]">
            <ScrollArrow label="Scroll up" d="M0 6h8L4 2z" />
            <div className="flex-[39]" />
            <div className="flex-[127] border border-t-white border-r-[#404040] border-b-[#404040] border-l-white bg-[#d4d0c8]" />
            <div className="flex-[69]" />
            <ScrollArrow label="Scroll down" d="M0 2h8L4 6z" />
          </div>
          <div className="col-start-1 row-start-3 flex items-center bg-[repeating-conic-gradient(#ffffff_0_25%,#d4d0c8_0_50%)] bg-[length:2px_2px]">
            <ScrollArrow label="Scroll left" d="M6 0v8L2 4z" />
            <div className="h-4 flex-[142] border border-t-white border-r-[#404040] border-b-[#404040] border-l-white bg-[#d4d0c8]" />
            <div className="flex-[82]" />
            <ScrollArrow label="Scroll right" d="M2 0v8l4-4z" />
          </div>
          <div className="col-start-2 row-start-3 bg-[#d4d0c8]" />
        </div>
      </div>
      <div className="h-[5px] shrink-0 border-y border-[#a0a0a0] bg-[#dcdcdc]" />
    </section>
  );
}

function Viewport() {
  return (
    <main className="min-w-0 flex-1 bg-linear-to-b from-[#b1b1b1] to-[#fdfdfd]">
      <svg viewBox="328 189 622 342" fill="none" className="block h-full w-full" role="img" aria-label="Model view">
        {/* base plate */}
        <path d="M461 472 507 433 532 433 640 436 690 439C718 441 735 445 746 452C757 459 757 466 750 473C742 482 730 492 710 499C688 507 660 510 630 507L561 493z" fill="#f59e49" />
        <path d="M467 470 508 438 560 438 660 441 700 444C722 446 738 450 744 456C752 462 747 470 738 478C724 491 712 496 690 501C665 505 645 505 620 500L560 488z" fill="#ffb154" />
        {/* arm */}
        <path d="M585 219 600 214C650 207 690 236 710 261C730 287 739 318 738 350L740 477 690 473 605 464C640 459 667 443 684 423C699 405 700 385 700 345C699 320 693 305 684 289C670 266 651 254 630 246C615 241 600 239 585 238z" fill="#2e3535" />
        {/* fins */}
        <path d="M717 363 720 478 703 492zM701 404 703 476 690 488z" fill="#17191b" />
        <path d="M701 404 696 440 689 490M716 390 711 440 703 492" stroke="#c4d0d0" strokeWidth="1.500" />
        <path d="M700 412V476M717 363 716 395" stroke="#5c6868" />
        <path d="M703 492 718 478M690 488 702 477" stroke="#17191b" />
        {/* rim crossing the arm */}
        <path d="M640 438 700 441C724 443 737 448 746 454" stroke="#f59e49" strokeWidth="5" />
        {/* head block */}
        <path d="m541 221 14-9 48 2-20 8z" fill="#93a4a7" />
        <path d="m541 221 38 2v19l-38-2z" fill="#2e3535" />
        <path d="m578 223 7-4v19l-7 5z" fill="#17191b" />
        <path d="M541 240.500 579 242.500 585 238 600 238.500C620 239 651 252 670 268C690 287 700 318 700 345C699 372 700 385 697 393C692 418 675 436 655 448C640 457 625 463 583 462L539 458" stroke="#3f5cf8" strokeWidth="1.700" />
        <path d="M566 217 600 213.500C650 207 690 236 710 261C730 287 739 318 738.500 350V385" stroke="#3f5cf8" strokeWidth="1.700" />
        <path d="M738.500 365C737 400 733 440 728 475L723 491" stroke="#3f5cf8" strokeWidth="3" strokeDasharray="11 3" />
        <path d="M736 367 732 430 727 490M739 367 740 475" stroke="#857c55" strokeWidth="1.500" strokeDasharray="8 3" />
        <path d="M463 475 560 494 630 508C660 511 690 509 716 499" stroke="#3f5cf8" strokeWidth="1.500" />
        <path d="M716 499C733 493 745 482 753 472" stroke="#111" strokeWidth="1.500" strokeDasharray="8 1" />
        <circle cx="462" cy="473" r="1.500" fill="#333" />
        {/* center lines */}
        <path d="M590 238 699 245V300L701 405" stroke="#857c55" strokeWidth="1.700" strokeDasharray="11 4 3 4" />
        {/* construction lines */}
        <path d="M680 474 736 480M686 490 718 493" stroke="#d0d0c8" />
        <path d="M737 394 740 442 713 440M740 404V414M727 452V490M725 496 714 505" stroke="#9c5860" />
        <path d="m738 405 3 11h-4zM714 504l8-4-2 7-5 1z" fill="#8a4c54" />
        <path d="m662 474 14-3v6z" fill="#b4b4ac" />
        {/* datum planes */}
        <path d="m704 232.500 97 6.500-30 26-99-8z" fill="#c0508c" fillOpacity=".2" stroke="#b9588c" strokeWidth="1.700" />
        <path d="m591 403.500 1 42-36 32-1-44z" fill="#c0508c" fillOpacity=".18" />
        <path d="M591.500 446v-43L555.500 433V477" stroke="#b9588c" strokeWidth="1.700" />
        <path d="M639 189 482 293" stroke="#c04c80" strokeWidth="1.300" />
        <path d="m603 213-42 27" stroke="#e4e8e8" strokeWidth="1.500" />
        <path d="m477 297 5-8 4-2 3 4-1 5-7 1z" fill="#dc5c98" />
        <path d="m480 296 8-4v4z" fill="#90406c" />
        {/* section markers */}
        <path d="M736.500 193v9M732 197.500h9M702.500 517v4M698 521.500h9" stroke="#3f5cf8" strokeWidth="1.300" />
        {/* view triad */}
        <path d="M346 478 352 473H366V486L361 491 346 490z" fill="#cfcfcf" stroke="#9c9c9c" />
        <path d="M346 478h15v13M361 478l5-5" stroke="#9c9c9c" />
        <path d="M342 486.500 362 488" stroke="#b86060" strokeWidth="1.500" />
        <path d="M366.500 464V484" stroke="#1030d8" strokeWidth="2" />
        <path d="m366 488-9 6" stroke="#289030" strokeWidth="3" />
        <circle cx="367" cy="488" r="3.500" fill="#bcbcbc" />
        <g className="font-['Liberation_Sans',sans-serif] text-[12px]" textAnchor="middle">
          <text x="336" y="491" fill="#d04040">X</text>
          <text x="366" y="462" fill="#1030f0">Z</text>
          <text x="355" y="502" fill="#289030">Y</text>
          <text x="655" y="478" fill="#bcb49c">X</text>
          <text x="712" y="515" fill="#a86068">Y</text>
        </g>
      </svg>
    </main>
  );
}

export default function App() {
  return (
    <div className="flex h-screen flex-col overflow-hidden bg-white font-['DejaVu_Sans_Condensed','DejaVu_Sans',sans-serif] text-[11px] leading-[14px] text-[#1a1a1a]">
      <div className="flex min-h-0 flex-1 flex-col border border-b-0 border-[#a0a0a0] px-[3px]">
        <TitleBar />
        <TabRow />
        <Ribbon />
        <SelectionBar />
        <div className="flex min-h-0 flex-1 border-b border-[#a0a0a0]">
          <ResourceBar />
          <PartNavigator />
          <Viewport />
        </div>
        <footer className="flex h-[21px] shrink-0 items-center justify-end gap-1 pr-[55px]">
          <button type="button" aria-label="Finish sketch" className="border border-[#c0c0c0] bg-[#e4e4e4]">
            <Svg w={14} h={14}><path d="m2 3 4 1 7-2v6l-6 1-3-1 1 5" stroke="#8a8a8a" /><path d="M4 4h3v2H4zM9 3h3v2H9zM6 6h3v2H6z" fill="#777" /></Svg>
          </button>
          <button type="button" aria-label="Full screen"><WindowFit /></button>
        </footer>
      </div>
      <div className="h-1 shrink-0 border-y border-[#a0a0a0] bg-[#549fb8]" />
    </div>
  );
}
